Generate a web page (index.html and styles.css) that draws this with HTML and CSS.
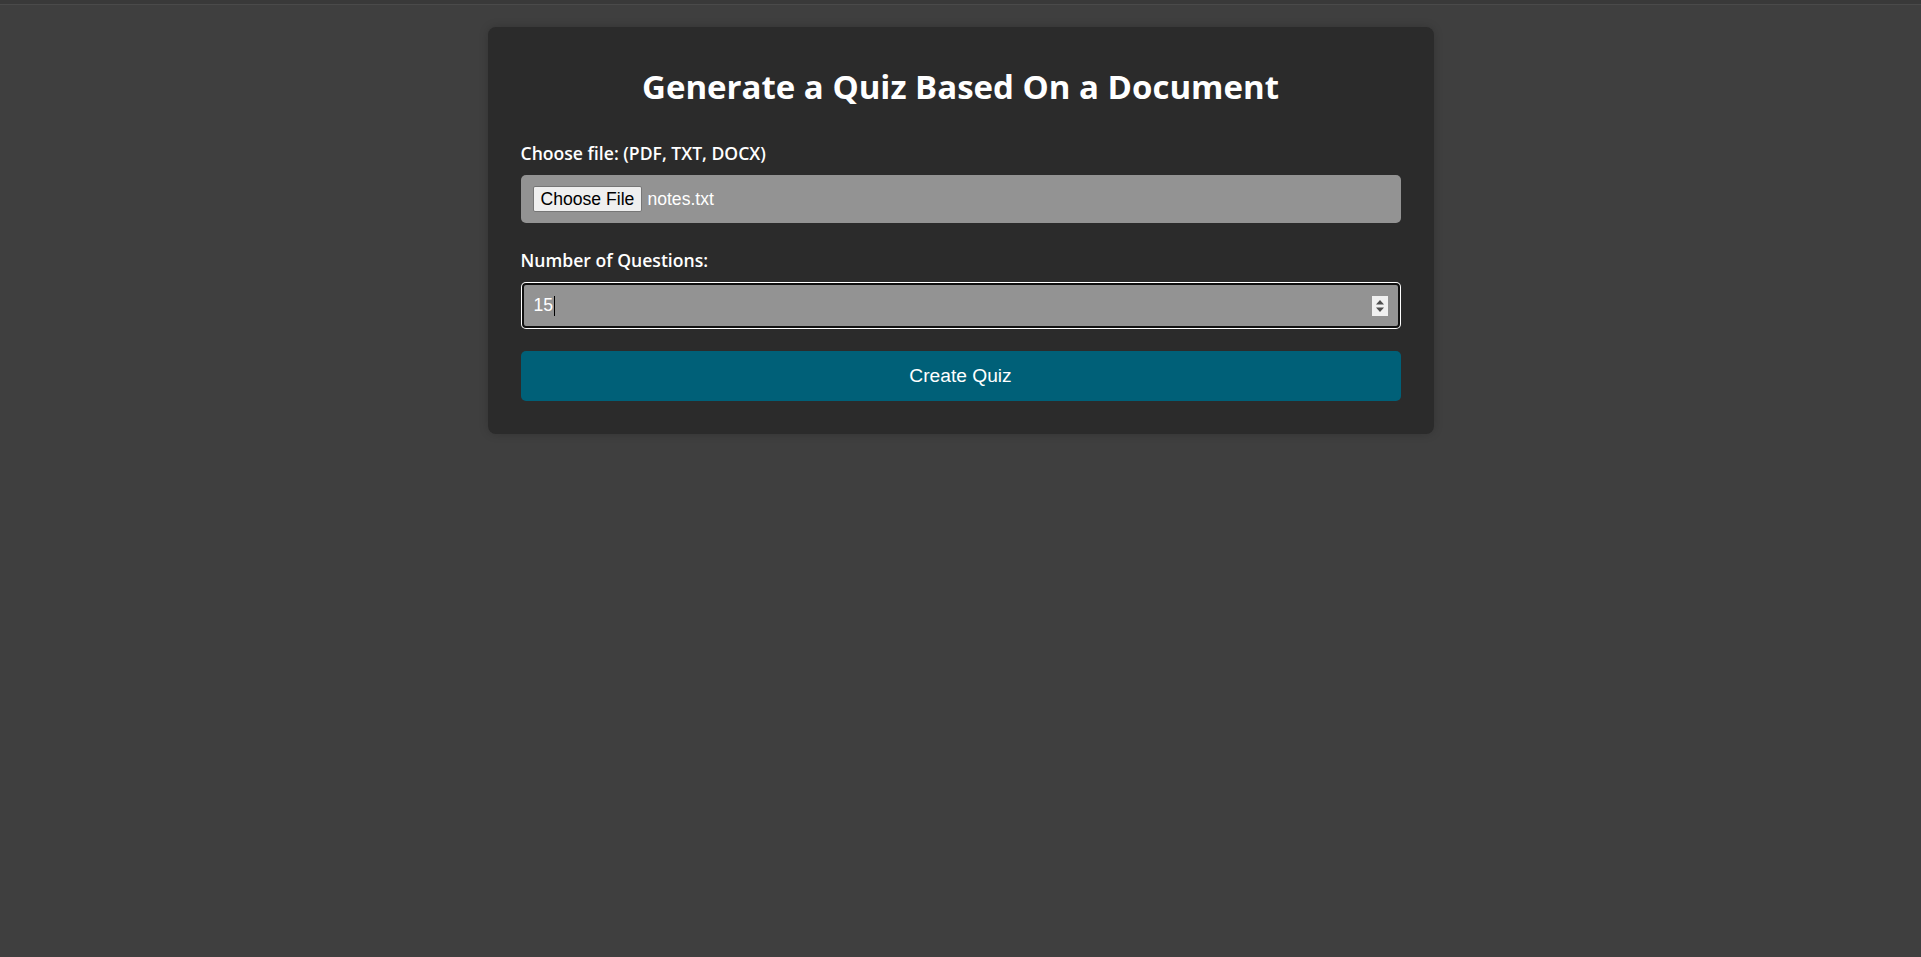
FILE: index.html
```html
<!DOCTYPE html>
<html lang="en">
<head>
<meta charset="utf-8">
<title>Quiz Generator</title>
<link rel="stylesheet" href="styles.css">
</head>
<body>
<div class="topbar"></div>
<main class="page">
  <section class="card">
    <h1 class="title">Generate a Quiz Based On a Document</h1>
    <form class="form">
      <div class="field field-file">
        <label class="label">Choose file: (PDF, TXT, DOCX)</label>
        <div class="file-box">
          <span class="file-btn">Choose File</span>
          <span class="file-name">notes.txt</span>
        </div>
      </div>
      <div class="field field-num">
        <label class="label">Number of Questions:</label>
        <div class="num-box">
          <span class="num-value">15</span><span class="caret"></span>
          <span class="spinner">
            <svg width="16" height="20" viewBox="0 0 16 20">
              <rect width="16" height="20" fill="#f0f0f0"/>
              <path d="M8 4 L12 8.5 L4 8.5 Z" fill="#4d4d4d"/>
              <path d="M8 16 L12 11.5 L4 11.5 Z" fill="#4d4d4d"/>
            </svg>
          </span>
        </div>
      </div>
      <button type="button" class="submit">Create Quiz</button>
    </form>
  </section>
</main>
</body>
</html>
```

FILE: styles.css
```css
html, body {
  margin: 0;
  padding: 0;
}
body {
  background: #3f3f3f;
  font-family: "Trebuchet MS", "Open Sans", "DejaVu Sans", sans-serif;
  color: #ffffff;
  min-height: 957px;
}
.topbar {
  height: 4px;
  background: #393939;
  border-bottom: 1px solid #4a4a4a;
}
.page {
  display: flex;
  justify-content: center;
  padding-top: 22px;
}
.card {
  width: 946px;
  box-sizing: border-box;
  background: #2b2b2b;
  border-radius: 8px;
  padding: 40px 33px 33px;
  box-shadow: 0 0 10px rgba(0, 0, 0, 0.18);
}
.title {
  margin: 0 0 34px;
  text-align: center;
  font-size: 33px;
  line-height: 40px;
  font-weight: 700;
}
.form {
  display: flex;
  flex-direction: column;
}
.field {
  display: flex;
  flex-direction: column;
}
.field-file {
  margin-bottom: 25px;
}
.field-num {
  margin-bottom: 22px;
}
.label {
  font-size: 17.6px;
  line-height: 24px;
  font-weight: 600;
  margin-bottom: 10px;
}
.file-box {
  height: 48px;
  box-sizing: border-box;
  background: #939393;
  border-radius: 5px;
  padding: 0 12px;
  display: flex;
  align-items: center;
  font-family: "Liberation Sans", Arial, sans-serif;
  font-size: 17.6px;
}
.file-btn {
  color: #000;
  background: #efefef;
  border: 1px solid #767676;
  border-radius: 2px;
  height: 26px;
  box-sizing: border-box;
  padding: 0 7px;
  display: flex;
  align-items: center;
  margin-right: 5px;
}
.file-name {
  color: #fff;
}
.num-box {
  height: 47px;
  box-sizing: border-box;
  background: #939393;
  border-radius: 5px;
  box-shadow: inset 0 0 0 1px #ffffff, inset 0 0 0 3px #101010;
  padding: 0 13px 0 13px;
  display: flex;
  align-items: center;
  font-family: "Liberation Sans", Arial, sans-serif;
  font-size: 17.6px;
}
.num-value {
  color: #fff;
}
.caret {
  width: 1px;
  height: 20px;
  background: #000;
  margin-left: 1px;
}
.spinner {
  margin-left: auto;
  display: flex;
}
.submit {
  height: 50px;
  border: none;
  border-radius: 5px;
  background: #006078;
  color: #fff;
  font-family: "Liberation Sans", Arial, sans-serif;
  font-size: 19.2px;
  cursor: pointer;
}
```
